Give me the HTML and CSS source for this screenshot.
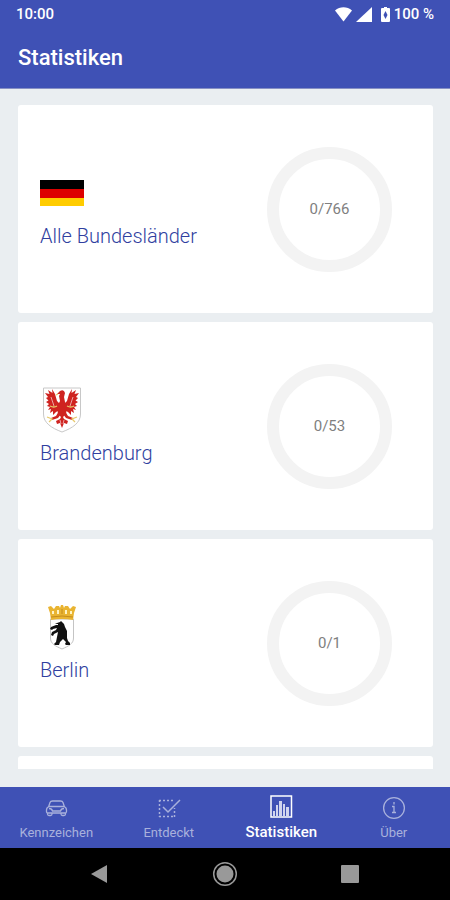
FILE: index.html
```html
<!DOCTYPE html>
<html lang="de">
<head>
    <meta charset="UTF-8">
    <meta name="viewport" content="width=device-width, initial-scale=1.0">
    <title>Statistiken</title>
    <link rel="stylesheet" href="styles.css">
</head>
<body>

    <header class="header">
        <div class="statusbar">
            <span>10:00</span>
            <div class="status-icons">
                <svg width="17" height="15" viewBox="0 0 17 15" fill="#fff"><path d="M0 3.5C5-.8 12-.8 17 3.5L8.500 14.500z"/></svg>
                <svg width="17" height="15" viewBox="0 0 17 15" fill="#fff"><path d="M0 15L16 0v15z"/></svg>
                <svg class="battery" width="9" height="15" viewBox="0 0 9 15"><path fill="#fff" d="M3 0h3v1h2q1 0 1 1v12q0 1-1 1H1q-1 0-1-1V2q0-1 1-1h2z"/><path fill="#3f51b5" d="M4.500 4L6.500 8l-2 4-2-4z"/></svg>
                <span>100 %</span>
            </div>
        </div>
        <h1>Statistiken</h1>
    </header>

    <main class="content">
        <section class="list">
            <article class="card">
                <div class="land">
                    <svg class="wappen" viewBox="0 0 44 46">
                        <path fill="#000" d="M0 10h44v9H0z"/>
                        <path fill="#d00" d="M0 19h44v9H0z"/>
                        <path fill="#fc0" d="M0 28h44v8H0z"/>
                    </svg>
                    <h2>Alle Bundesländer</h2>
                </div>
                <div class="ring">0/766</div>
            </article>

            <article class="card">
                <div class="land">
                    <svg class="wappen" viewBox="0 0 44 46">
                        <path fill="#fff" stroke="#c8c8c8" d="M3.500 1h37v26c0 9-8 14-18.500 18C11.500 41 3.500 36 3.500 27z"/>
                        <g fill="#cf2320">
                            <!-- Flügel -->
                            <path d="M20 17l-3-3-2-7-3-5 .5 4L8 3l1.500 4L5 6l3 4-2 1 2.500 2.500L6 15l3 2-2 2 3 1-2 3 3-1-1 4 3-2 0 4 3-3 4-2z"/>
                            <path d="M24 17l3-3 2-7 3-5-.5 4L36 3l-1.500 4L39 6l-3 4 2 1-2.500 2.500L38 15l-3 2 2 2-3 1 2 3-3-1 1 4-3-2 0 4-3-3-4-2z"/>
                            <!-- Kopf und Rumpf -->
                            <path d="M17 7l3-3q4-2 5 2l-1 4 1 5 2 5-1 7-4 4-4-4-1-7 3-6-1-5 1-2z"/>
                            <!-- Fänge und Schwanz -->
                            <path d="M19 24l-3 5-5 2 1 2 6-2 3-4zM25 24l3 5 5 2-1 2-6-2-3-4zM22 28l2 4 4 2-1 3-3-1-2 5-2-5-3 1-1-3 4-2z"/>
                        </g>
                        <path fill="none" stroke="#fff" stroke-width=".6" d="M11 10l3 9M33 10l-3 9M20 33l1 4M24 33l-1 4"/>
                        <path fill="none" stroke="#e8c96a" stroke-width="1.300" d="M10 19q4 2 7 0M34 19q-3 2-7 0M7 30l5 2-3 3M37 30l-5 2 3 3M18 7l-2 1"/>
                    </svg>
                    <h2>Brandenburg</h2>
                </div>
                <div class="ring">0/53</div>
            </article>

            <article class="card">
                <div class="land">
                    <svg class="wappen" viewBox="0 0 44 46">
                        <path fill="#fff" stroke="#c4c4c4" d="M10.500 15h23v19c0 6-5 8-11.500 11-6.500-3-11.500-5-11.500-11z"/>
                        <path fill="#e9b431" d="M8 3l3-1 3 3 2-3h3l1 2 1-3h2l1 3 1-2h3l2 3 3-3 3 1-2 6-1 7q-11-2-22 0l-1-7z"/>
                        <path fill="#fff4c4" d="M12 7h2v3h-2zM17 6h2v4h-2zM25 6h2v4h-2zM30 7h2v3h-2z"/>
                        <path fill="none" stroke="#c58c1c" d="M11 13q11-2 22 0M22 5v5"/>
                        <path fill="#111" d="M17 19l3-1 1-1 1 1 2 2 1 3 2 4v7l1 3 2 2v2h-4l-1-1 1-2-3-3-3 3-1 3h-4l-1-1 2-2 1-5 1-5-4 2-1 2-2-1 1-3 4-2 1-2-4 1-1 1-2-1 1-2 5-2h2v-1h-3z"/>
                    </svg>
                    <h2>Berlin</h2>
                </div>
                <div class="ring">0/1</div>
            </article>

            <article class="card"></article>
        </section>
    </main>

    <nav class="tabs">
        <a href="#kennzeichen">
            <svg width="24" height="24" viewBox="0 0 24 24" fill="none" stroke="currentColor" stroke-width="1.300">
                <path d="M4.500 11L6 6.500Q6.500 5 8.500 5h8q2 0 2.500 1.500L20.500 11M5 10.500h15q2.500 1 2.500 3.500v1.500q0 1.500-1.500 1.500H4q-1.500 0-1.500-1.500V14q0-2.500 2.500-3.500z"/>
                <path d="M3.500 17v1q0 1.500 1.500 1.500h1.500Q8 19.500 8 18v-1M17 17v1q0 1.500 1.500 1.500H20q1.500 0 1.500-1.500v-1M5 12.500q3 0 3.500 2.500h8q.5-2.500 3.500-2.500"/>
            </svg>
            <span>Kennzeichen</span>
        </a>
        <a href="#entdeckt">
            <svg width="24" height="24" viewBox="0 0 24 24" fill="none" stroke="currentColor">
                <path stroke-width="1.500" stroke-dasharray="2 2" d="M2 4.500h15M2.500 4v17M2 20.500h16M17.500 21v-9"/>
                <path stroke-width="1.500" d="M6 11l5 5L23 4"/>
            </svg>
            <span>Entdeckt</span>
        </a>
        <a href="#statistiken" class="active">
            <svg width="24" height="24" viewBox="0 0 24 24">
                <path fill="none" stroke="currentColor" stroke-width="1.500" d="M2 1h20.500v21H2z"/>
                <path fill="#d0d4ee" d="M4 16h2v5H4zM7 10h2v11H7zM10 6h3v15h-3zM14 9h2v12h-2zM17 12h3v9h-3z"/>
            </svg>
            <span>Statistiken</span>
        </a>
        <a href="#ueber">
            <svg width="24" height="24" viewBox="0 0 24 24" fill="none" stroke="currentColor" stroke-width="1.300">
                <circle cx="12" cy="12" r="10.400"/>
                <path d="M12 6v2.500M10 10.500h2v6M10 16.500h4"/>
            </svg>
            <span>Über</span>
        </a>
    </nav>

    <footer class="sysnav">
        <button type="button" aria-label="Zurück">
            <svg width="26" height="26" viewBox="0 0 26 26"><path fill="#999" d="M4 13L20 4v18z"/></svg>
        </button>
        <button type="button" aria-label="Startbildschirm">
            <svg width="26" height="26" viewBox="0 0 26 26"><circle cx="13" cy="13" r="11.300" fill="none" stroke="#999" stroke-width="1.500"/><circle cx="13" cy="13" r="8.500" fill="#999"/></svg>
        </button>
        <button type="button" aria-label="Übersicht">
            <svg width="26" height="26" viewBox="0 0 26 26"><rect x="4" y="4" width="18" height="18" rx="1" fill="#999"/></svg>
        </button>
    </footer>

</body>
</html>
```

FILE: styles.css
```css
* {
    box-sizing: border-box;
}
body {
    margin: 0;
    height: 100vh;
    display: flex;
    flex-direction: column;
    font-family: Roboto, "Liberation Sans", sans-serif;
    background: #eaeef1;
}
.header {
    background: #3f51b5;
    color: white;
    border-bottom: 1px solid #8790c4;
}
.statusbar {
    display: flex;
    justify-content: space-between;
    align-items: center;
    height: 28px;
    padding: 0 16px;
    font-size: 15px;
    font-weight: 500;
}
.status-icons {
    display: flex;
    align-items: center;
    gap: 4px;
}
.battery {
    margin-left: 4px;
}
h1 {
    margin: 0;
    padding: 0 18px;
    font-size: 22px;
    font-weight: 500;
    line-height: 60px;
}
.content {
    flex: 1;
    min-height: 0;
    padding: 16px 17px 18px 18px;
}
.list {
    height: 100%;
    overflow: hidden;
    display: flex;
    flex-direction: column;
    gap: 9px;
}
.card {
    flex: none;
    display: flex;
    justify-content: space-between;
    align-items: center;
    min-height: 208px;
    padding: 0 41px 0 22px;
    border-radius: 3px;
    background: white;
}
.land {
    display: flex;
    flex-direction: column;
    gap: 8px;
}
.wappen {
    width: 44px;
    height: 46px;
}
h2 {
    margin: 0;
    font-size: 20px;
    font-weight: 300;
    line-height: 24px;
    color: #303f9f;
}
.ring {
    display: flex;
    justify-content: center;
    align-items: center;
    width: 125px;
    height: 125px;
    border: 12px solid #f3f3f3;
    border-radius: 50%;
    font-size: 15px;
    color: #808080;
}
.tabs {
    display: flex;
    height: 61px;
    background: #3f51b5;
}
.tabs a {
    flex: 1;
    display: flex;
    flex-direction: column;
    align-items: center;
    gap: 4px;
    padding-top: 9px;
    font-size: 13px;
    line-height: 18px;
    color: #a9b1dc;
    text-decoration: none;
}
.tabs a.active {
    padding-top: 8px;
    font-size: 15px;
    font-weight: 500;
    color: white;
}
.sysnav {
    display: flex;
    align-items: center;
    height: 52px;
    padding: 0 38px;
    background: black;
}
.sysnav button {
    flex: 1;
    display: flex;
    justify-content: center;
    padding: 0;
    border: none;
    background: none;
    cursor: pointer;
}
```
